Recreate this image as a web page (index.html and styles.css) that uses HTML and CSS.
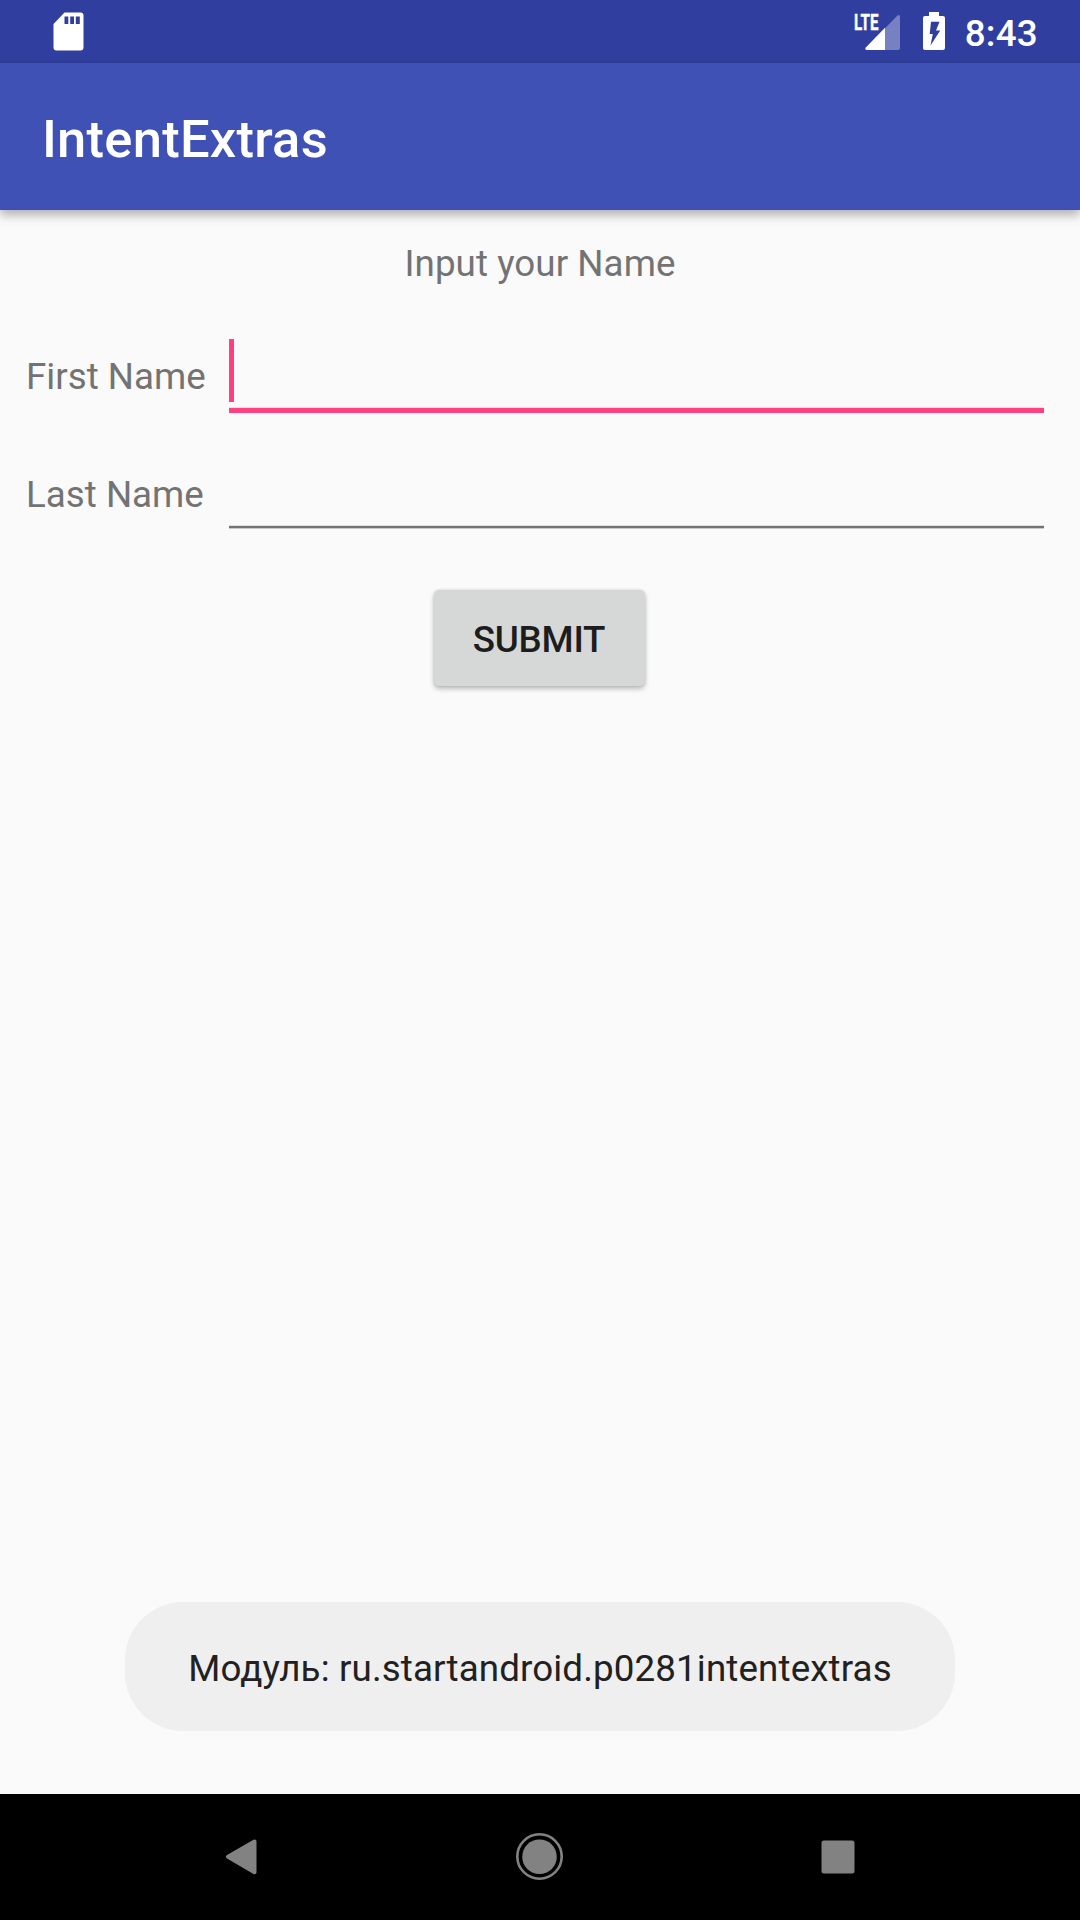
FILE: index.html
```html
<!DOCTYPE html>
<html lang="en">
<head>
<meta charset="utf-8">
<title>IntentExtras</title>
<link rel="stylesheet" href="styles.css">
</head>
<body>
<div class="screen">
  <div class="status">
    <svg class="sd" width="32" height="40" viewBox="0 0 32 40"><path fill="#fff" fill-rule="evenodd" d="M11.5.5H27.500q3 0 3 3V35.500q0 3-3 3H3.500q-3 0-3-3V12ZM11.500 4.500v7.500h3.800V4.500ZM17.200 4.500v7.500h3.800V4.500ZM22.800 4.500v7.500h4V4.500Z"/></svg>
    <div class="indicators">
      <svg class="signal" width="46" height="48" viewBox="0 -8 46 48">
        <path fill="#7780c0" d="M31 16.300 43.500 3.600q2.500-1.600 2.500 1.200V36q0 2-2 2H31Z"/>
        <path fill="#fff" d="M31 15.800V38H12.500q-2-.5-1-2.200Z"/>
        <text class="lte" x="0" y="17.800" textLength="24.500" lengthAdjust="spacingAndGlyphs">LTE</text>
      </svg>
      <svg class="battery" width="22" height="40" viewBox="0 0 22 40"><path fill="#fff" fill-rule="evenodd" d="M6 0H16V4H20q2 0 2 2V36q0 2-2 2H2q-2 0-2-2V6Q0 4 2 4H6ZM8 9.700 6.700 22H9.800L7.500 33.500 17.200 18.500H13L16.500 9.700Z"/></svg>
      <span class="time">8:43</span>
    </div>
  </div>
  <header class="appbar"><h1>IntentExtras</h1></header>
  <main class="content">
    <p class="prompt">Input your Name</p>
    <div class="row"><label>First Name</label><div class="field focused"><i class="caret"></i></div></div>
    <div class="row"><label>Last Name</label><div class="field"></div></div>
    <button class="submit">SUBMIT</button>
    <div class="toast">Модуль: ru.startandroid.p0281intentextras</div>
  </main>
  <nav class="navbar">
    <svg width="48" height="48" viewBox="0 0 48 48"><path fill="#828282" stroke="#828282" stroke-width="4" stroke-linejoin="round" d="M12 23.800 38.500 8.500V39.200Z"/></svg>
    <svg width="48" height="48" viewBox="0 0 48 48"><circle cx="24.500" cy="23.500" r="22.200" fill="none" stroke="#828282" stroke-width="2.600"/><circle cx="24.500" cy="23.800" r="17.300" fill="#828282"/></svg>
    <svg width="48" height="48" viewBox="0 0 48 48"><rect x="7.500" y="7.500" width="33" height="33" rx="2.500" fill="#828282"/></svg>
  </nav>
</div>
</body>
</html>
```
FILE: styles.css
```css
* { box-sizing: border-box; margin: 0; }
body { font-family: Roboto, sans-serif; font-size: 36.75px; line-height: 43px; color: #737373; }
.screen { display: flex; flex-direction: column; width: 1080px; height: 1920px; background: #fafafa; overflow: hidden; }
.status { display: flex; justify-content: space-between; height: 63px; padding: 12px 42px 0 53px; background: #303f9f; color: #fff; }
.status svg { display: block; }
.indicators { display: flex; align-items: flex-start; }
.signal { margin-top: -8px; }
.battery { margin-left: 23px; }
.time { margin-left: 20px; font-weight: 500; letter-spacing: .25px; }
.lte { font-family: Roboto, sans-serif; font-size: 22.5px; font-weight: 700; fill: #fff; stroke: #fff; stroke-width: .4px; }
.appbar { height: 147px; padding: 45px 42px 0; background: #3f51b5; color: #fff; box-shadow: 0 5px 10px rgba(0, 0, 0, .3); }
.appbar h1 { font-size: 52.5px; line-height: 62px; font-weight: 500; letter-spacing: .25px; }
.content { display: flex; flex: 1; flex-direction: column; align-items: center; padding: 32px 26px 63px; }
.prompt { margin-bottom: 26px; letter-spacing: .05px; }
.row { display: grid; grid-template-columns: 203px 815px; align-self: flex-start; align-items: start; height: 118px; }
.row label { padding-top: 44px; }
.field { height: 100px; border-bottom: 2px solid #737373; box-shadow: 0 1px 0 #c9c9c9, inset 0 -1px 0 #e0e0e0; margin-top: -1px; }
.field.focused { height: 102px; margin-top: 0; padding-top: 28px; border-bottom: 5px solid #ff4081; box-shadow: inset 0 -1px 0 #e8e0e2; }
.caret { display: block; width: 5px; height: 63px; background: #ff4081; }
.submit { width: 211px; height: 96px; margin: 43px 1px 0 0; padding: 2px 1px 0 0; border: 0; border-radius: 5px; background: #d6d8d7; color: #1d1d1d; font: 500 36.75px/43px Roboto, sans-serif; letter-spacing: -.25px; box-shadow: 0 3px 5px rgba(0, 0, 0, .24), 0 0 3px rgba(0, 0, 0, .12); }
.toast { width: 830px; height: 129px; margin-top: auto; padding: 45px 0 0; border-radius: 58px; background: #efefef; color: #212121; letter-spacing: .12px; text-align: center; white-space: nowrap; }
.navbar { display: flex; justify-content: space-between; height: 126px; padding: 39px 218px 0 216px; background: #000; }
```
